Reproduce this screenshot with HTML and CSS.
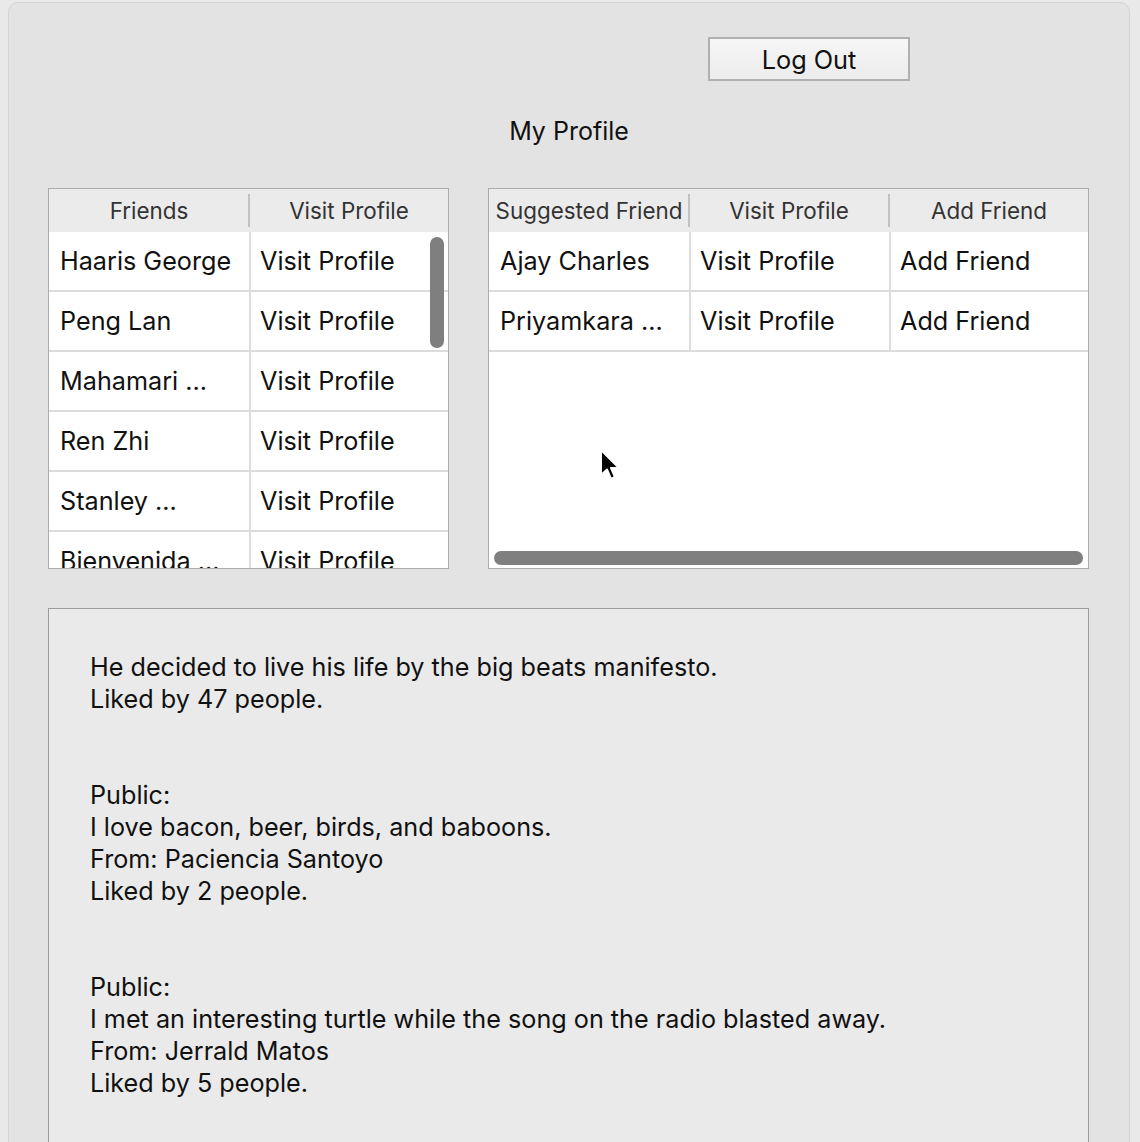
FILE: index.html
```html
<!DOCTYPE html>
<html lang="en">
<head>
    <meta charset="UTF-8">
    <meta name="viewport" content="width=device-width, initial-scale=1.0">
    <title>My Profile</title>
    <link rel="stylesheet" href="styles.css">
</head>
<body>
    <div class="window">
        <div class="top-bar">
            <button class="btn-logout">Log Out</button>
        </div>

        <h1 class="title">My Profile</h1>

        <div class="tables">
            <div class="table-box friends">
                <div class="table-head">
                    <div class="th">Friends</div>
                    <div class="th">Visit Profile</div>
                </div>
                <div class="table-body">
                    <div class="tr"><div class="td">Haaris George</div><div class="td">Visit Profile</div></div>
                    <div class="tr"><div class="td">Peng Lan</div><div class="td">Visit Profile</div></div>
                    <div class="tr"><div class="td">Mahamari ...</div><div class="td">Visit Profile</div></div>
                    <div class="tr"><div class="td">Ren Zhi</div><div class="td">Visit Profile</div></div>
                    <div class="tr"><div class="td">Stanley ...</div><div class="td">Visit Profile</div></div>
                    <div class="tr"><div class="td">Bienvenida ...</div><div class="td">Visit Profile</div></div>
                </div>
                <div class="scroll-v"></div>
            </div>

            <div class="table-box suggested">
                <div class="table-head">
                    <div class="th">Suggested Friend</div>
                    <div class="th">Visit Profile</div>
                    <div class="th">Add Friend</div>
                </div>
                <div class="table-body">
                    <div class="tr"><div class="td">Ajay Charles</div><div class="td">Visit Profile</div><div class="td">Add Friend</div></div>
                    <div class="tr"><div class="td">Priyamkara ...</div><div class="td">Visit Profile</div><div class="td">Add Friend</div></div>
                </div>
                <div class="scroll-h"></div>
                <svg class="cursor" width="24" height="36" viewBox="0 0 24 36">
                    <path d="M3 2 L3 27 L9 21.5 L13 31 L17 29 L13 20 L21 20 Z" fill="#000" stroke="#fff" stroke-width="2" stroke-linejoin="round"/>
                </svg>
            </div>
        </div>

        <div class="posts">
            <p>He decided to live his life by the big beats manifesto.<br>Liked by 47 people.</p>
            <p>Public:<br>I love bacon, beer, birds, and baboons.<br>From: Paciencia Santoyo<br>Liked by 2 people.</p>
            <p>Public:<br>I met an interesting turtle while the song on the radio blasted away.<br>From: Jerrald Matos<br>Liked by 5 people.</p>
        </div>
    </div>
</body>
</html>
```

FILE: styles.css
```css
/* Geral */
* {
    margin: 0;
    padding: 0;
    box-sizing: border-box;
}

body {
    background-color: #e9e9e9;
    font-family: 'Inter', 'Roboto', sans-serif;
    color: #111;
    overflow: hidden;
}

.window {
    margin: 2px 0 0 8px;
    width: 1122px;
    height: 1200px;
    background-color: #e3e3e3;
    border: 1px solid #d4d4d4;
    border-radius: 10px 10px 0 0;
}

/* Topo */
.top-bar {
    padding: 34px 0 0 699px;
}

.btn-logout {
    width: 202px;
    height: 44px;
    font-family: inherit;
    font-size: 25.3px;
    color: #111;
    background: linear-gradient(#f6f6f6, #ececec);
    border: 2px solid #b0b0b0;
    cursor: pointer;
}

.title {
    margin-top: 34px;
    text-align: center;
    font-size: 25px;
    font-weight: normal;
    line-height: 32px;
}

/* Tabelas */
.tables {
    display: flex;
    gap: 39px;
    margin: 41px 0 0 39px;
}

.table-box {
    position: relative;
    height: 381px;
    background-color: #fff;
    border: 1px solid #acacac;
    overflow: hidden;
}

.friends {
    width: 401px;
}

.suggested {
    width: 601px;
}

.table-head {
    display: flex;
    height: 43px;
    background-color: #ebebeb;
}

.th {
    flex: 0 0 200px;
    display: flex;
    align-items: center;
    justify-content: center;
    font-size: 22.4px;
    color: #333;
    position: relative;
    white-space: nowrap;
}

.th + .th::before {
    content: '';
    position: absolute;
    left: -1px;
    top: 5px;
    bottom: 5px;
    width: 2px;
    background-color: #c2c2c2;
}

.tr {
    display: flex;
    height: 60px;
    border-bottom: 2px solid #dcdcdc;
}

.td {
    flex: 0 0 200px;
    display: flex;
    align-items: center;
    padding-left: 11px;
    font-size: 25.2px;
    white-space: nowrap;
}

.td + .td {
    border-left: 2px solid #dcdcdc;
    padding-left: 9px;
}

.scroll-v {
    position: absolute;
    left: 381px;
    top: 48px;
    width: 14px;
    height: 111px;
    border-radius: 7px;
    background-color: #7f7f7f;
}

.scroll-h {
    position: absolute;
    left: 5px;
    right: 5px;
    bottom: 3px;
    height: 14px;
    border-radius: 7px;
    background-color: #7f7f7f;
}

.cursor {
    position: absolute;
    left: 109px;
    top: 259px;
}

/* Postagens */
.posts {
    margin: 39px 0 0 39px;
    width: 1041px;
    height: 600px;
    padding: 42px 0 0 41px;
    background-color: #eaeaea;
    border: 1px solid #9c9c9c;
    border-bottom: none;
    font-size: 25.2px;
    line-height: 32px;
}

.posts p {
    margin-bottom: 64px;
}
```
